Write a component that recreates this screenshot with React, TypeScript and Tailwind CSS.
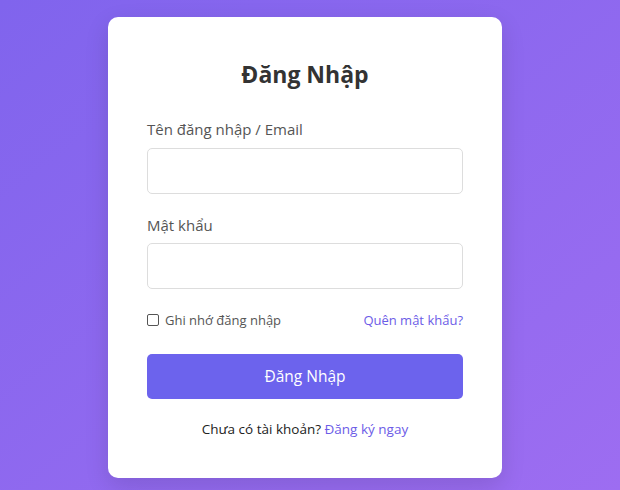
export default function App() {
    return (
        <div
            className="flex min-h-[490px] w-full items-center justify-center bg-gradient-to-br from-[#8064ed] to-[#9d6df1] py-[17px] pr-[10px]"
            style={{ fontFamily: '"Open Sans", "Noto Sans", sans-serif' }}
        >
            <div className="w-[394px] rounded-[10px] bg-white px-[39px] pt-[40px] pb-[38px] shadow-[0_8px_24px_rgba(0,0,0,0.12)]">
                <h1 className="mb-[26px] text-center text-[23px] leading-[34px] font-bold text-[#333]">
                    Đăng Nhập
                </h1>
                <form className="flex flex-col">
                    <label className="mb-[7px] text-[15px] leading-[24px] text-[#555]">
                        Tên đăng nhập / Email
                    </label>
                    <input
                        type="text"
                        className="mb-[19px] h-[46px] w-full rounded-[5px] border border-[#ddd] px-3 outline-none"
                    />
                    <label className="mb-[6px] text-[15px] leading-[24px] text-[#555]">
                        Mật khẩu
                    </label>
                    <input
                        type="password"
                        className="mb-[20px] h-[46px] w-full rounded-[5px] border border-[#ddd] px-3 outline-none"
                    />
                    <div className="mb-[23px] flex items-center justify-between text-[13px] leading-[22px]">
                        <label className="flex items-center gap-[6px] text-[#555]">
                            <input type="checkbox" className="h-[12px] w-[12px] appearance-none rounded-[2px] border border-[#555] bg-white" />
                            Ghi nhớ đăng nhập
                        </label>
                        <a href="#" className="text-[#6c5ce7]">
                            Quên mật khẩu?
                        </a>
                    </div>
                    <button
                        type="button"
                        className="h-[45px] w-full rounded-[5px] bg-[#6c63ed] text-[15.5px] text-white"
                    >
                        Đăng Nhập
                    </button>
                    <p className="mt-[19px] text-center text-[13.5px] leading-[22px] text-[#222]">
                        Chưa có tài khoản?{" "}
                        <a href="#" className="text-[#6c5ce7]">
                            Đăng ký ngay
                        </a>
                    </p>
                </form>
            </div>
        </div>
    );
}
